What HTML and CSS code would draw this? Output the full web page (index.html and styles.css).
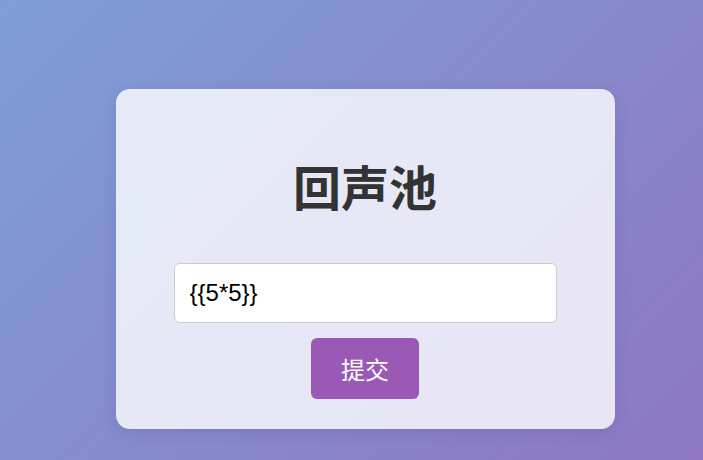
FILE: index.html
```html
<!DOCTYPE html>
<html lang="zh">
<head>
<meta charset="utf-8">
<title>回声池</title>
<link rel="stylesheet" href="styles.css">
</head>
<body>
<div class="page">
  <div class="card">
    <h1 class="title">回声池</h1>
    <form class="form">
      <input class="field" type="text" value="{{5*5}}">
      <button class="submit" type="button">提交</button>
    </form>
  </div>
</div>
</body>
</html>
```
FILE: styles.css
```css
html, body {
  margin: 0;
  padding: 0;
  height: 100%;
}
body {
  background: linear-gradient(135deg, #7f9ed8 0%, #8e77c3 100%);
  font-family: "Liberation Sans", "Noto Sans CJK SC", sans-serif;
}
.page {
  padding-top: 89px;
  padding-left: 116px;
}
.card {
  box-sizing: border-box;
  width: 499px;
  height: 340px;
  background: rgba(255, 255, 255, 0.8);
  border-radius: 14px;
  box-shadow: 0 4px 14px rgba(60, 50, 120, 0.15);
  display: flex;
  flex-direction: column;
  align-items: center;
  padding-top: 64px;
  padding-right: 1px;
}
.title {
  margin: 0;
  font-family: "Noto Sans CJK SC", sans-serif;
  font-size: 48px;
  font-weight: 700;
  line-height: 64px;
  color: #333;
}
.form {
  margin-top: 46px;
  display: flex;
  flex-direction: column;
  align-items: center;
  gap: 15px;
}
.field {
  box-sizing: border-box;
  width: 383px;
  height: 60px;
  border: 1px solid #ccc;
  border-radius: 6px;
  background: #fff;
  padding: 0 15px;
  font-family: "Liberation Sans", sans-serif;
  font-size: 24px;
  color: #000;
  outline: none;
}
.submit {
  width: 108px;
  height: 61px;
  border: none;
  border-radius: 6px;
  background: #9b59b6;
  color: #fff;
  font-family: "Liberation Sans", "Noto Sans CJK SC", sans-serif;
  font-size: 24px;
  padding: 0;
}
```
